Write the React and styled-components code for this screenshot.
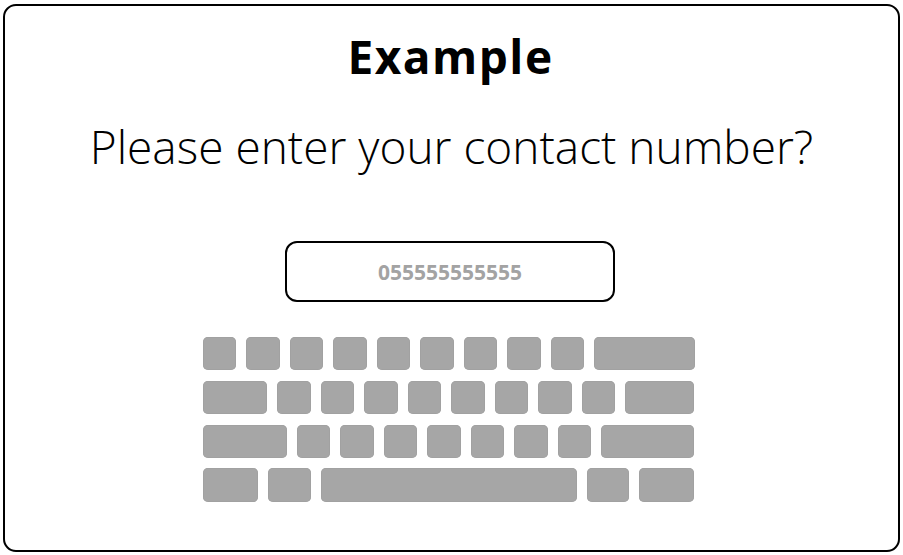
import React from 'react';
import styled, { createGlobalStyle } from 'styled-components';

const keyGray = '#a6a6a6';

const GlobalStyle = createGlobalStyle`
    html, body {
        margin: 0;
        padding: 0;
        background: #ffffff;
    }
    body {
        font-family: 'Open Sans', sans-serif;
    }
`;

const Page = styled.div`
    width: 903px;
    height: 555px;
    box-sizing: border-box;
    padding: 4px 3px 3px 3px;
`;

const Card = styled.div`
    width: 897px;
    height: 548px;
    box-sizing: border-box;
    border: 2.5px solid #000;
    border-radius: 13px;
    padding-top: 19px;

    display: flex;
    flex-direction: column;
    align-items: center;
`;

const Title = styled.h1`
    margin: 0 0 0 -2px;
    font-family: 'Open Sans', sans-serif;
    font-size: 46px;
    font-weight: 700;
    letter-spacing: 1.5px;
    line-height: normal;
    color: #000;
`;

const Question = styled.p`
    margin: 28px 0 0 0;
    font-family: 'Open Sans', sans-serif;
    font-size: 46px;
    font-weight: 300;
    line-height: normal;
    color: #000;
`;

const NumberBox = styled.div`
    margin: 64px 0 0 -3px;
    width: 330px;
    height: 61px;
    box-sizing: border-box;
    border: 2.5px solid #000;
    border-radius: 12px;

    display: flex;
    justify-content: center;
    align-items: center;

    font-family: 'Open Sans', sans-serif;
    font-size: 21px;
    font-weight: 700;
    color: #a3a3a3;
`;

const Keyboard = styled.div`
    margin: 35px 0 0 -6px;
    width: 492px;
    display: flex;
    flex-direction: column;
    gap: 10.5px;
`;

const KeyRow = styled.div`
    display: flex;
    justify-content: space-between;
`;

const Key = styled.div`
    width: ${props => `${props.w || 33.5}px`};
    height: 33.3px;
    border-radius: 5px;
    background: ${keyGray};
    box-shadow: inset 0 0 0 0.5px #9c9c9c;
`;

const rows = [
    [33.5, 33.5, 33.5, 33.5, 33.5, 33.5, 33.5, 33.5, 33.5, 100.5],
    [64.6, 33.5, 33.5, 33.5, 33.5, 33.5, 33.5, 33.5, 33.5, 69],
    [84, 33.5, 33.5, 33.5, 33.5, 33.5, 33.5, 33.5, 93.3],
    [55.7, 42.7, 255.7, 42.3, 55.7],
];

const App = () => {
    return (
        <Page>
            <GlobalStyle />
            <Card>
                <Title>Example</Title>
                <Question>Please enter your contact number?</Question>
                <NumberBox>055555555555</NumberBox>
                <Keyboard>
                    {rows.map((row, i) => (
                        <KeyRow key={i}>
                            {row.map((w, j) => <Key key={j} w={w} />)}
                        </KeyRow>
                    ))}
                </Keyboard>
            </Card>
        </Page>
    );
};

export default App;
